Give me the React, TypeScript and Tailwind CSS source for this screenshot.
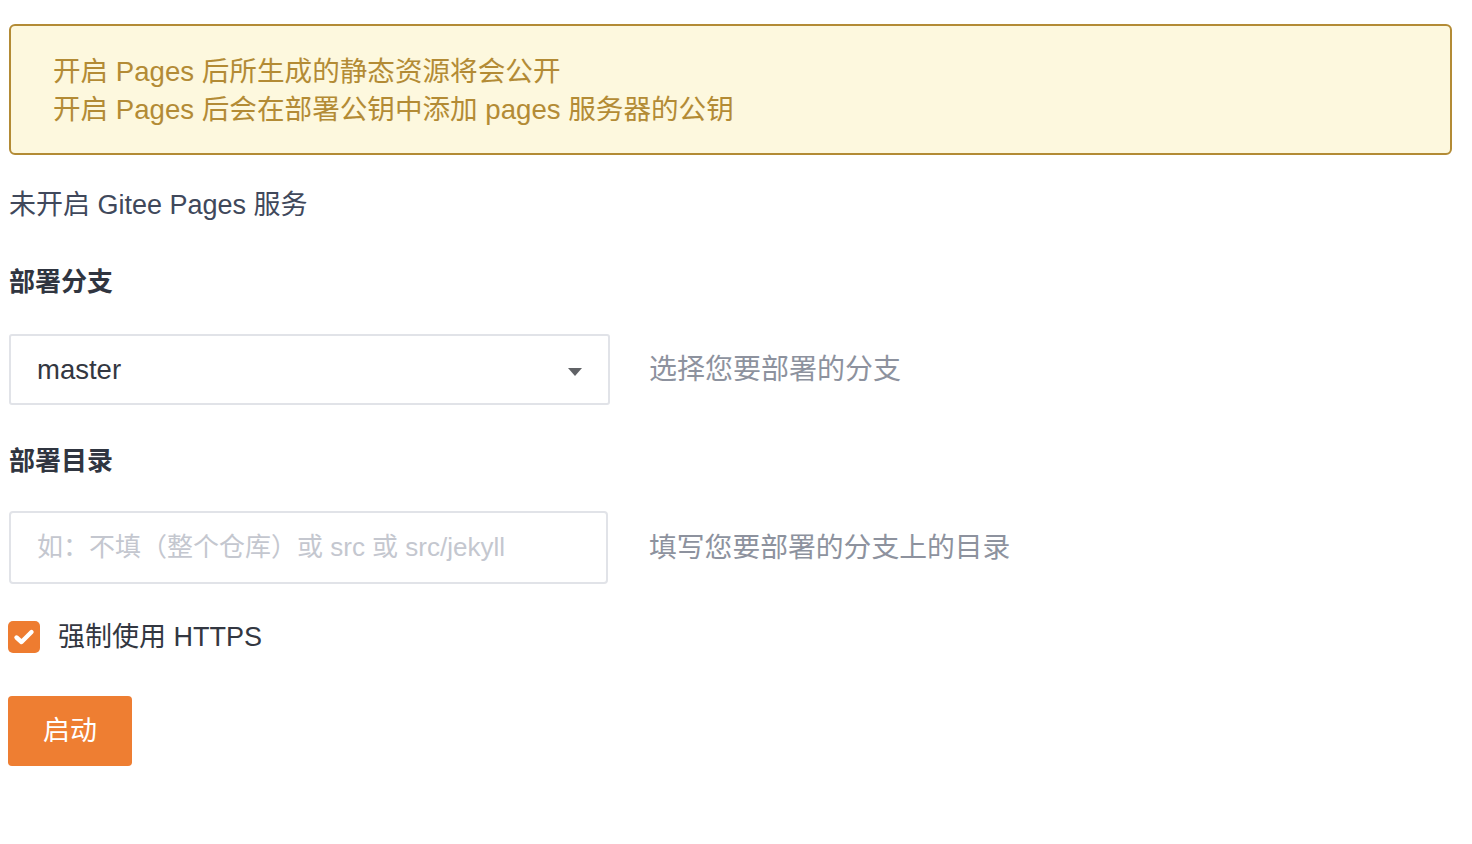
import React from "react";

export default function App() {
  return (
    <div
      className="min-h-[844px] w-[1472px] bg-white pl-[9px] pr-[20px] pt-[24px]"
      style={{ fontFamily: '"Liberation Sans", "Noto Sans CJK SC", sans-serif' }}
    >
      <div className="rounded-[6px] border-2 border-[#b38b35] bg-[#fdf8de] pl-[42px] pr-4 pt-[27px] pb-[24px] text-[27.6px] leading-[38px] text-[#b38b35]">
        <div>开启 Pages 后所生成的静态资源将会公开</div>
        <div>开启 Pages 后会在部署公钥中添加 pages 服务器的公钥</div>
      </div>

      <div className="mt-[32px] text-[27px] leading-[36px] text-[#40485b]">未开启 Gitee Pages 服务</div>

      <div className="mt-[41px] text-[26px] font-bold leading-[36px] text-[#303540]">部署分支</div>

      <div className="mt-[34px] flex items-center">
        <div className="flex h-[71px] w-[601px] items-center justify-between rounded-[3px] border-2 border-[#e1e3e8] pl-[26px] pr-[26px]">
          <span className="text-[27.5px] text-[#333741]">master</span>
          <svg width="14" height="9" viewBox="0 0 14 9" className="mt-[6px]">
            <path d="M0 0 L14 0 L7 8 Z" fill="#606266" />
          </svg>
        </div>
        <div className="ml-[39px] text-[28px] text-[#8d929e]">选择您要部署的分支</div>
      </div>

      <div className="mt-[38px] text-[26px] font-bold leading-[36px] text-[#303540]">部署目录</div>

      <div className="mt-[32px] flex items-center">
        <div className="flex h-[73px] w-[599px] items-center rounded-[4px] border-2 border-[#e1e3e8] pl-[26px]">
          <span className="text-[26px] text-[#c4c7cf]">如：不填（整个仓库）或 src 或 src/jekyll</span>
        </div>
        <div className="ml-[41px] text-[27.8px] text-[#8d929e]">填写您要部署的分支上的目录</div>
      </div>

      <div className="mt-[37px] flex h-[32px] items-center">
        <div className="ml-[-1px] flex h-[32px] w-[32px] items-center justify-center rounded-[5px] bg-[#ee7c30]">
          <svg width="22" height="18" viewBox="0 0 22 18">
            <path d="M3.5 9.5 L8.5 14 L18.5 4" fill="none" stroke="#ffffff" strokeWidth="4.4" strokeLinecap="round" strokeLinejoin="round" />
          </svg>
        </div>
        <span className="ml-[18px] text-[27px] leading-[32px] text-[#333741]">强制使用 HTTPS</span>
      </div>

      <button className="ml-[-1px] mt-[43px] flex h-[70px] w-[124px] items-center justify-center rounded-[4px] bg-[#ee7e32] text-[27px] text-white">
        启动
      </button>
    </div>
  );
}
